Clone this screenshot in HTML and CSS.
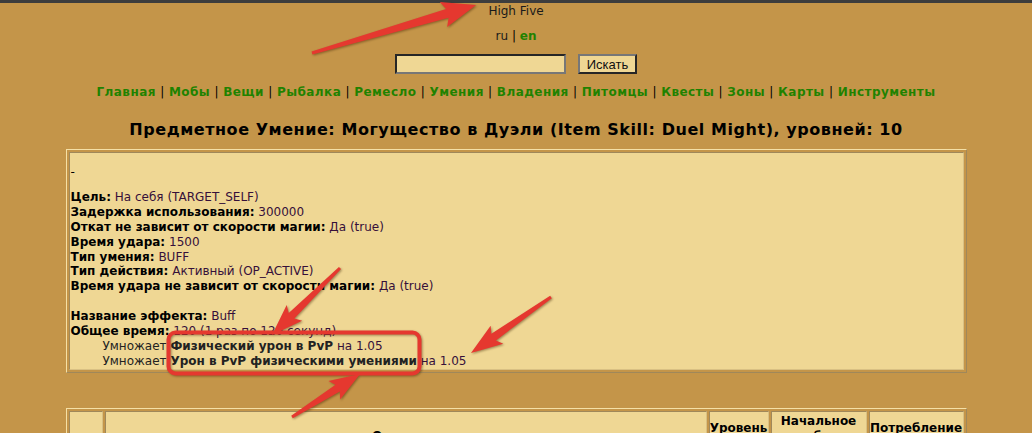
FILE: index.html
```html
<!DOCTYPE html>
<html lang="ru">
<head>
  <meta charset="UTF-8" />
  <title>Предметное Умение: Могущество в Дуэли - High Five</title>
  <link rel="stylesheet" href="styles.css">
</head>
<body>

<div class="topbar"></div>

<div class="site">High Five</div>
<div class="lang">ru <span class="sep">|</span> <a href="#">en</a></div>

<form class="search">
  <input type="text" />
  <button type="submit">Искать</button>
</form>

<nav class="menu">
  <a href="#">Главная</a> <span class="sep">|</span>
  <a href="#">Мобы</a> <span class="sep">|</span>
  <a href="#">Вещи</a> <span class="sep">|</span>
  <a href="#">Рыбалка</a> <span class="sep">|</span>
  <a href="#">Ремесло</a> <span class="sep">|</span>
  <a href="#">Умения</a> <span class="sep">|</span>
  <a href="#">Владения</a> <span class="sep">|</span>
  <a href="#">Питомцы</a> <span class="sep">|</span>
  <a href="#">Квесты</a> <span class="sep">|</span>
  <a href="#">Зоны</a> <span class="sep">|</span>
  <a href="#">Карты</a> <span class="sep">|</span>
  <a href="#">Инструменты</a>
</nav>

<h1>Предметное Умение: Могущество в Дуэли (Item Skill: Duel Might), уровней: 10</h1>

<table class="box">
  <tr>
    <td>
      <div class="desc">-</div>
      <b>Цель:</b> <span class="val">На себя (TARGET_SELF)</span><br>
      <b>Задержка использования:</b> <span class="val">300000</span><br>
      <b>Откат не зависит от скорости магии:</b> <span class="val">Да (true)</span><br>
      <b>Время удара:</b> <span class="val">1500</span><br>
      <b>Тип умения:</b> <span class="val">BUFF</span><br>
      <b>Тип действия:</b> <span class="val">Активный (OP_ACTIVE)</span><br>
      <b>Время удара не зависит от скорости магии:</b> <span class="val">Да (true)</span><br>
      <br>
      <b>Название эффекта:</b> <span class="val">Buff</span><br>
      <b>Общее время:</b> <span class="val">120 (1 раз по 120 секунд)</span><br>
      <div class="mod">Умножает <b>Физический урон в PvP</b> <span class="val">на 1.05</span></div>
      <div class="mod">Умножает <b>Урон в PvP физическими умениями</b> <span class="val">на 1.05</span></div>
    </td>
  </tr>
</table>

<table class="levels">
  <colgroup>
    <col class="c-icon">
    <col>
    <col class="c-lvl">
    <col class="c-init">
    <col class="c-mp">
  </colgroup>
  <tr>
    <th></th>
    <th class="name">Описание</th>
    <th>Уровень</th>
    <th>Начальное<br>потребление</th>
    <th>Потребление</th>
  </tr>
</table>

<svg class="marks" width="1032" height="433" viewBox="0 0 1032 433">
  <g fill="#e5382f">
    <path transform="translate(312 53) rotate(-16.3)" d="M0 -1.5 L141 -4.5 L137 -13 L171 0 L137 13 L141 4.5 L0 1.5 Z" />
    <path transform="translate(340 268) rotate(135.4)" d="M0 -1.5 L68 -4 L64 -11 L95.5 0 L64 11 L68 4 L0 1.5 Z" />
    <path transform="translate(551 297) rotate(145)" d="M0 -1.5 L70 -4 L66 -11 L97.7 0 L66 11 L70 4 L0 1.5 Z" />
    <path transform="translate(292 417) rotate(-32.3)" d="M0 -1.5 L54 -4 L50 -11 L80.5 0 L50 11 L54 4 L0 1.5 Z" />
  </g>
  <rect x="168.5" y="332.5" width="251" height="41" rx="7" fill="none" stroke="#e5382f" stroke-width="4" />
</svg>

</body>
</html>
```

FILE: styles.css
```css
:root {
  --fondo: #c49549;
  --celda: #efd794;
  --verde: #1f8200;
  --claro: #f5e0a6;
  --oscuro: #a0885a;
}

body {
  font-family: "DejaVu Sans", Verdana, sans-serif;
  font-size: 12px;
  line-height: 15px;
  background-color: var(--fondo);
  color: #000;
  margin: 0;
  padding: 0;
  position: relative;
  height: 433px;
  overflow: hidden;
}

a {
  color: var(--verde);
  font-weight: bold;
  text-decoration: none;
}

.topbar {
  height: 3px;
  background-color: #3d3d3d;
}

.site {
  margin-top: 1px;
  text-align: center;
  color: #1a1a1a;
}

.lang {
  margin-top: 10px;
  text-align: center;
  color: #1a1a1a;
}

.sep {
  color: #000;
  font-weight: normal;
}

.search {
  margin: 10px 0 0;
  display: flex;
  justify-content: center;
  gap: 12px;
  height: 20px;
}

.search input {
  width: 171px;
  height: 20px;
  box-sizing: border-box;
  margin: 0;
  padding: 0 3px;
  background-color: var(--celda);
  border: 2px solid;
  border-color: #262626 #777 #777 #262626;
}

.search button {
  width: 59px;
  height: 20px;
  box-sizing: border-box;
  margin: 0;
  padding: 0;
  font-family: "Liberation Sans", Arial, sans-serif;
  font-size: 13px;
  color: #111;
  background-color: var(--celda);
  border: 2px solid;
  border-color: #777 #262626 #262626 #777;
}

.menu {
  margin-top: 11px;
  text-align: center;
  letter-spacing: 0.45px;
}

h1 {
  margin: 21px 0 0;
  font-size: 16px;
  line-height: 18px;
  text-align: center;
  letter-spacing: 0.55px;
}

table {
  width: 901px;
  margin: 10px auto 0;
  border-collapse: separate;
  border-spacing: 2px;
  border: 1px solid;
  border-color: var(--claro) var(--oscuro) var(--oscuro) var(--claro);
}

td, th {
  background-color: var(--celda);
  border: 1px solid;
  border-color: var(--oscuro) #d9c083 #d9c083 var(--oscuro);
}

.box td {
  padding: 12px 1px 0;
  line-height: 14.9px;
  vertical-align: top;
}

.desc {
  margin-bottom: 10px;
}

.val {
  color: #36103a;
}

.mod {
  padding-left: 32px;
  color: #222;
}

.levels {
  margin-top: 35px;
  table-layout: fixed;
}

.levels .c-icon {
  width: 34px;
}

.levels .c-lvl {
  width: 60px;
}

.levels .c-init {
  width: 96px;
}

.levels .c-mp {
  width: 95px;
}

.levels th {
  padding: 2px 0;
  font-size: 12px;
  line-height: 15px;
  white-space: nowrap;
  overflow: hidden;
}

.levels .name {
  vertical-align: bottom;
}

.marks {
  position: absolute;
  top: 0;
  left: 0;
  pointer-events: none;
  filter: drop-shadow(1px 1px 1px rgba(60, 30, 0, 0.45));
}
```
